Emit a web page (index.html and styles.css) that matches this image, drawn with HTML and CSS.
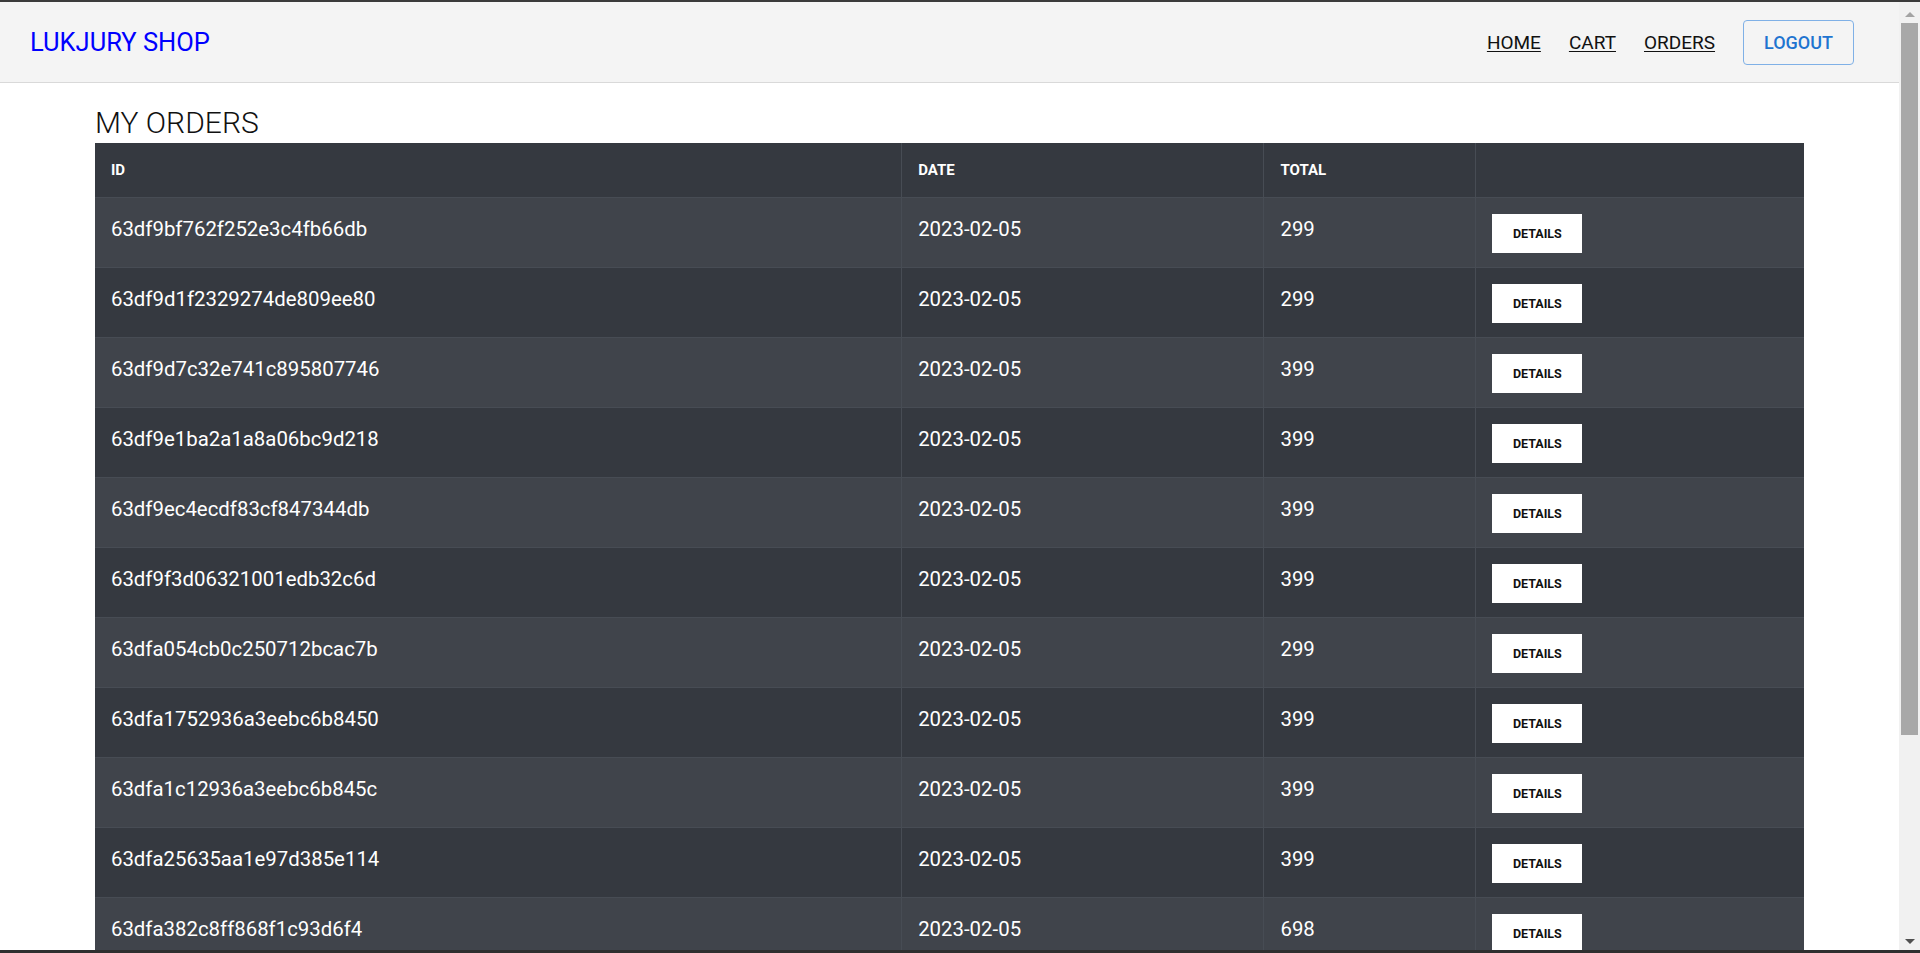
FILE: index.html
```html
<!DOCTYPE html>
<html lang="en">
<head>
<meta charset="utf-8">
<title>Lukjury Shop - My Orders</title>
<link rel="stylesheet" href="styles.css">
</head>
<body>
<div class="app">
  <header class="topbar">
    <a class="brand" href="#">LUKJURY SHOP</a>
    <nav class="nav">
      <a class="nav-link" href="#">HOME</a>
      <a class="nav-link" href="#">CART</a>
      <a class="nav-link" href="#">ORDERS</a>
      <button class="logout" type="button">LOGOUT</button>
    </nav>
  </header>
  <main class="content">
    <h1 class="page-title">MY ORDERS</h1>
    <table class="orders">
      <colgroup>
        <col class="col-id">
        <col class="col-date">
        <col class="col-total">
        <col class="col-action">
      </colgroup>
      <thead>
        <tr><th>ID</th><th>DATE</th><th>TOTAL</th><th></th></tr>
      </thead>
      <tbody>
        <tr><td>63df9bf762f252e3c4fb66db</td><td>2023-02-05</td><td>299</td><td><button class="details" type="button">DETAILS</button></td></tr>
        <tr><td>63df9d1f2329274de809ee80</td><td>2023-02-05</td><td>299</td><td><button class="details" type="button">DETAILS</button></td></tr>
        <tr><td>63df9d7c32e741c895807746</td><td>2023-02-05</td><td>399</td><td><button class="details" type="button">DETAILS</button></td></tr>
        <tr><td>63df9e1ba2a1a8a06bc9d218</td><td>2023-02-05</td><td>399</td><td><button class="details" type="button">DETAILS</button></td></tr>
        <tr><td>63df9ec4ecdf83cf847344db</td><td>2023-02-05</td><td>399</td><td><button class="details" type="button">DETAILS</button></td></tr>
        <tr><td>63df9f3d06321001edb32c6d</td><td>2023-02-05</td><td>399</td><td><button class="details" type="button">DETAILS</button></td></tr>
        <tr><td>63dfa054cb0c250712bcac7b</td><td>2023-02-05</td><td>299</td><td><button class="details" type="button">DETAILS</button></td></tr>
        <tr><td>63dfa1752936a3eebc6b8450</td><td>2023-02-05</td><td>399</td><td><button class="details" type="button">DETAILS</button></td></tr>
        <tr><td>63dfa1c12936a3eebc6b845c</td><td>2023-02-05</td><td>399</td><td><button class="details" type="button">DETAILS</button></td></tr>
        <tr><td>63dfa25635aa1e97d385e114</td><td>2023-02-05</td><td>399</td><td><button class="details" type="button">DETAILS</button></td></tr>
        <tr><td>63dfa382c8ff868f1c93d6f4</td><td>2023-02-05</td><td>698</td><td><button class="details" type="button">DETAILS</button></td></tr>
      </tbody>
    </table>
  </main>
</div>

<div class="scrollbar" aria-hidden="true">
  <span class="sb-arrow sb-up"></span>
  <span class="sb-thumb"></span>
  <span class="sb-arrow sb-down"></span>
</div>
<div class="frame-bottom" aria-hidden="true"></div>
</body>
</html>
```

FILE: styles.css
```css
html, body {
  margin: 0;
  padding: 0;
  background: #ffffff;
}

body {
  font-family: Roboto, "Liberation Sans", Arial, sans-serif;
  color: #212121;
  border-top: 2px solid #3b3b3b;
}

.app {
  margin-right: 21px;
}

/* ---------- top bar ---------- */
.topbar {
  height: 81px;
  box-sizing: border-box;
  display: flex;
  align-items: center;
  justify-content: space-between;
  padding: 0 45px 0 30px;
  background: #f4f4f4;
  border-bottom: 1px solid #d9d9d9;
}

.brand {
  color: #0000ff;
  text-decoration: none;
  font-size: 25.5px;
  font-weight: 400;
}

.nav {
  display: flex;
  align-items: center;
  gap: 28px;
}

.nav-link {
  color: #111111;
  font-size: 19px;
  text-decoration: underline;
  text-underline-offset: 2px;
}

.logout {
  height: 45px;
  box-sizing: border-box;
  padding: 0 20px;
  background: transparent;
  border: 1px solid #7fb0e6;
  border-radius: 4px;
  color: #1f74d0;
  font-family: inherit;
  font-size: 18px;
  font-weight: 500;
  cursor: pointer;
}

/* ---------- content ---------- */
.content {
  width: 90%;
  margin: 0 auto;
}

.page-title {
  margin: 22px 0 2px;
  font-size: 30px;
  line-height: 36px;
  font-weight: 300;
  color: #111111;
}

.orders {
  width: 100%;
  table-layout: fixed;
  border-collapse: collapse;
  background: #353940;
  color: #ffffff;
}

.col-id { width: 47.2%; }
.col-date { width: 21.2%; }
.col-total { width: 12.4%; }

.orders th,
.orders td {
  text-align: left;
  border-bottom: 1px solid #474c54;
  border-right: 1px solid #474c54;
}

.orders th:last-child,
.orders td:last-child {
  border-right: none;
}

.orders th {
  padding: 16px;
  font-size: 15px;
  line-height: 22px;
  font-weight: 700;
}

.orders td {
  padding: 16px 16px 14px;
  font-size: 20.4px;
  line-height: 30px;
  vertical-align: top;
}

.orders tbody tr:nth-child(odd) {
  background: #40444b;
}

.details {
  width: 90px;
  height: 39px;
  padding: 0;
  border: none;
  border-radius: 0;
  background: #ffffff;
  color: #111111;
  font-family: inherit;
  font-size: 12.5px;
  font-weight: 700;
  cursor: pointer;
  vertical-align: baseline;
}

/* ---------- browser chrome ---------- */
.scrollbar {
  position: fixed;
  top: 2px;
  right: 0;
  bottom: 3px;
  width: 21px;
  background: #f1f1f1;
}

.sb-arrow {
  position: absolute;
  left: 6px;
  width: 0;
  height: 0;
  border-left: 5px solid transparent;
  border-right: 5px solid transparent;
}

.sb-up {
  top: 10px;
  border-bottom: 5px solid #a3a3a3;
}

.sb-down {
  bottom: 6px;
  border-top: 5px solid #505050;
}

.sb-thumb {
  position: absolute;
  top: 21px;
  left: 2px;
  width: 17px;
  height: 712px;
  background: #a8a8a8;
}

.frame-bottom {
  position: fixed;
  left: 0;
  right: 0;
  bottom: 0;
  height: 3px;
  background: #2f2f2f;
}
```
